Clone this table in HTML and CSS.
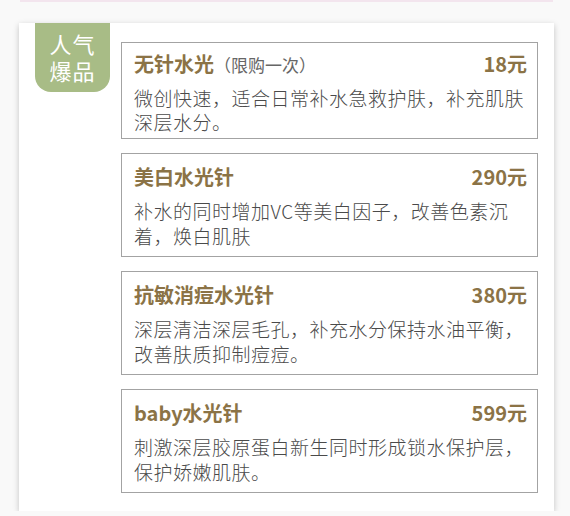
FILE: index.html
```html
<!DOCTYPE html>
<html lang="zh-CN">
<head>
    <meta charset="UTF-8">
    <meta name="viewport" content="width=device-width, initial-scale=1.0">
    <title>水光针价目</title>
    <link rel="stylesheet" href="styles.css">
</head>
<body>
    <div class="top-rule"></div>
    <section class="menu-card">
        <div class="badge">人气<br>爆品</div>
        <div class="item-list">
            <div class="item">
                <div class="item-head">
                    <h2 class="item-name">无针水光<span class="item-note">（限购一次）</span></h2>
                    <span class="item-price">18元</span>
                </div>
                <p class="item-desc">微创快速，适合日常补水急救护肤，补充肌肤深层水分。</p>
            </div>
            <div class="item">
                <div class="item-head">
                    <h2 class="item-name">美白水光针</h2>
                    <span class="item-price">290元</span>
                </div>
                <p class="item-desc">补水的同时增加VC等美白因子，改善色素沉着，焕白肌肤</p>
            </div>
            <div class="item">
                <div class="item-head">
                    <h2 class="item-name">抗敏消痘水光针</h2>
                    <span class="item-price">380元</span>
                </div>
                <p class="item-desc">深层清洁深层毛孔，补充水分保持水油平衡，改善肤质抑制痘痘。</p>
            </div>
            <div class="item">
                <div class="item-head">
                    <h2 class="item-name">baby水光针</h2>
                    <span class="item-price">599元</span>
                </div>
                <p class="item-desc">刺激深层胶原蛋白新生同时形成锁水保护层，保护娇嫩肌肤。</p>
            </div>
        </div>
    </section>
</body>
</html>
```

FILE: styles.css
```css
body {
    font-family: "Noto Sans CJK SC", "Noto Sans", sans-serif;
    margin: 0;
    padding: 0;
    background-color: #f9f9f9;
}
.top-rule {
    height: 2px;
    margin: 0 17px 0 20px;
    background-color: #f3e5ee;
}
.menu-card {
    display: flex;
    align-items: flex-start;
    gap: 11px;
    width: 535px;
    box-sizing: border-box;
    margin: 21px 0 0 19px;
    padding: 0 16px 18px 16px;
    background: white;
    box-shadow: 0 2px 6px rgba(0, 0, 0, 0.22);
}
.badge {
    flex: 0 0 75px;
    height: 69px;
    padding-top: 7px;
    box-sizing: border-box;
    background-color: #a8bc86;
    border-radius: 0 0 16px 16px;
    color: white;
    font-size: 22px;
    line-height: 27px;
    letter-spacing: 1px;
    text-align: center;
}
.item-list {
    flex: 1;
    display: flex;
    flex-direction: column;
    gap: 14px;
    padding-top: 19px;
}
.item {
    border: 1px solid #a3a3a3;
    padding: 8px 10px 8px 12px;
}
.item:first-child {
    padding-top: 6px;
    padding-bottom: 4px;
}
.item-head {
    display: flex;
    justify-content: space-between;
    align-items: baseline;
    line-height: 30px;
}
.item-name {
    margin: 0;
    font-size: 20px;
    font-weight: bold;
    color: #8b7346;
}
.item-note {
    font-size: 17px;
    font-weight: normal;
    color: #666;
}
.item-price {
    font-size: 20px;
    font-weight: bold;
    color: #8b7346;
}
.item-desc {
    margin: 6px 0 0;
    font-size: 19px;
    font-weight: 300;
    letter-spacing: 0.5px;
    line-height: 25px;
    color: #4a4a4a;
}
.item:first-child .item-desc {
    line-height: 24px;
}
```
